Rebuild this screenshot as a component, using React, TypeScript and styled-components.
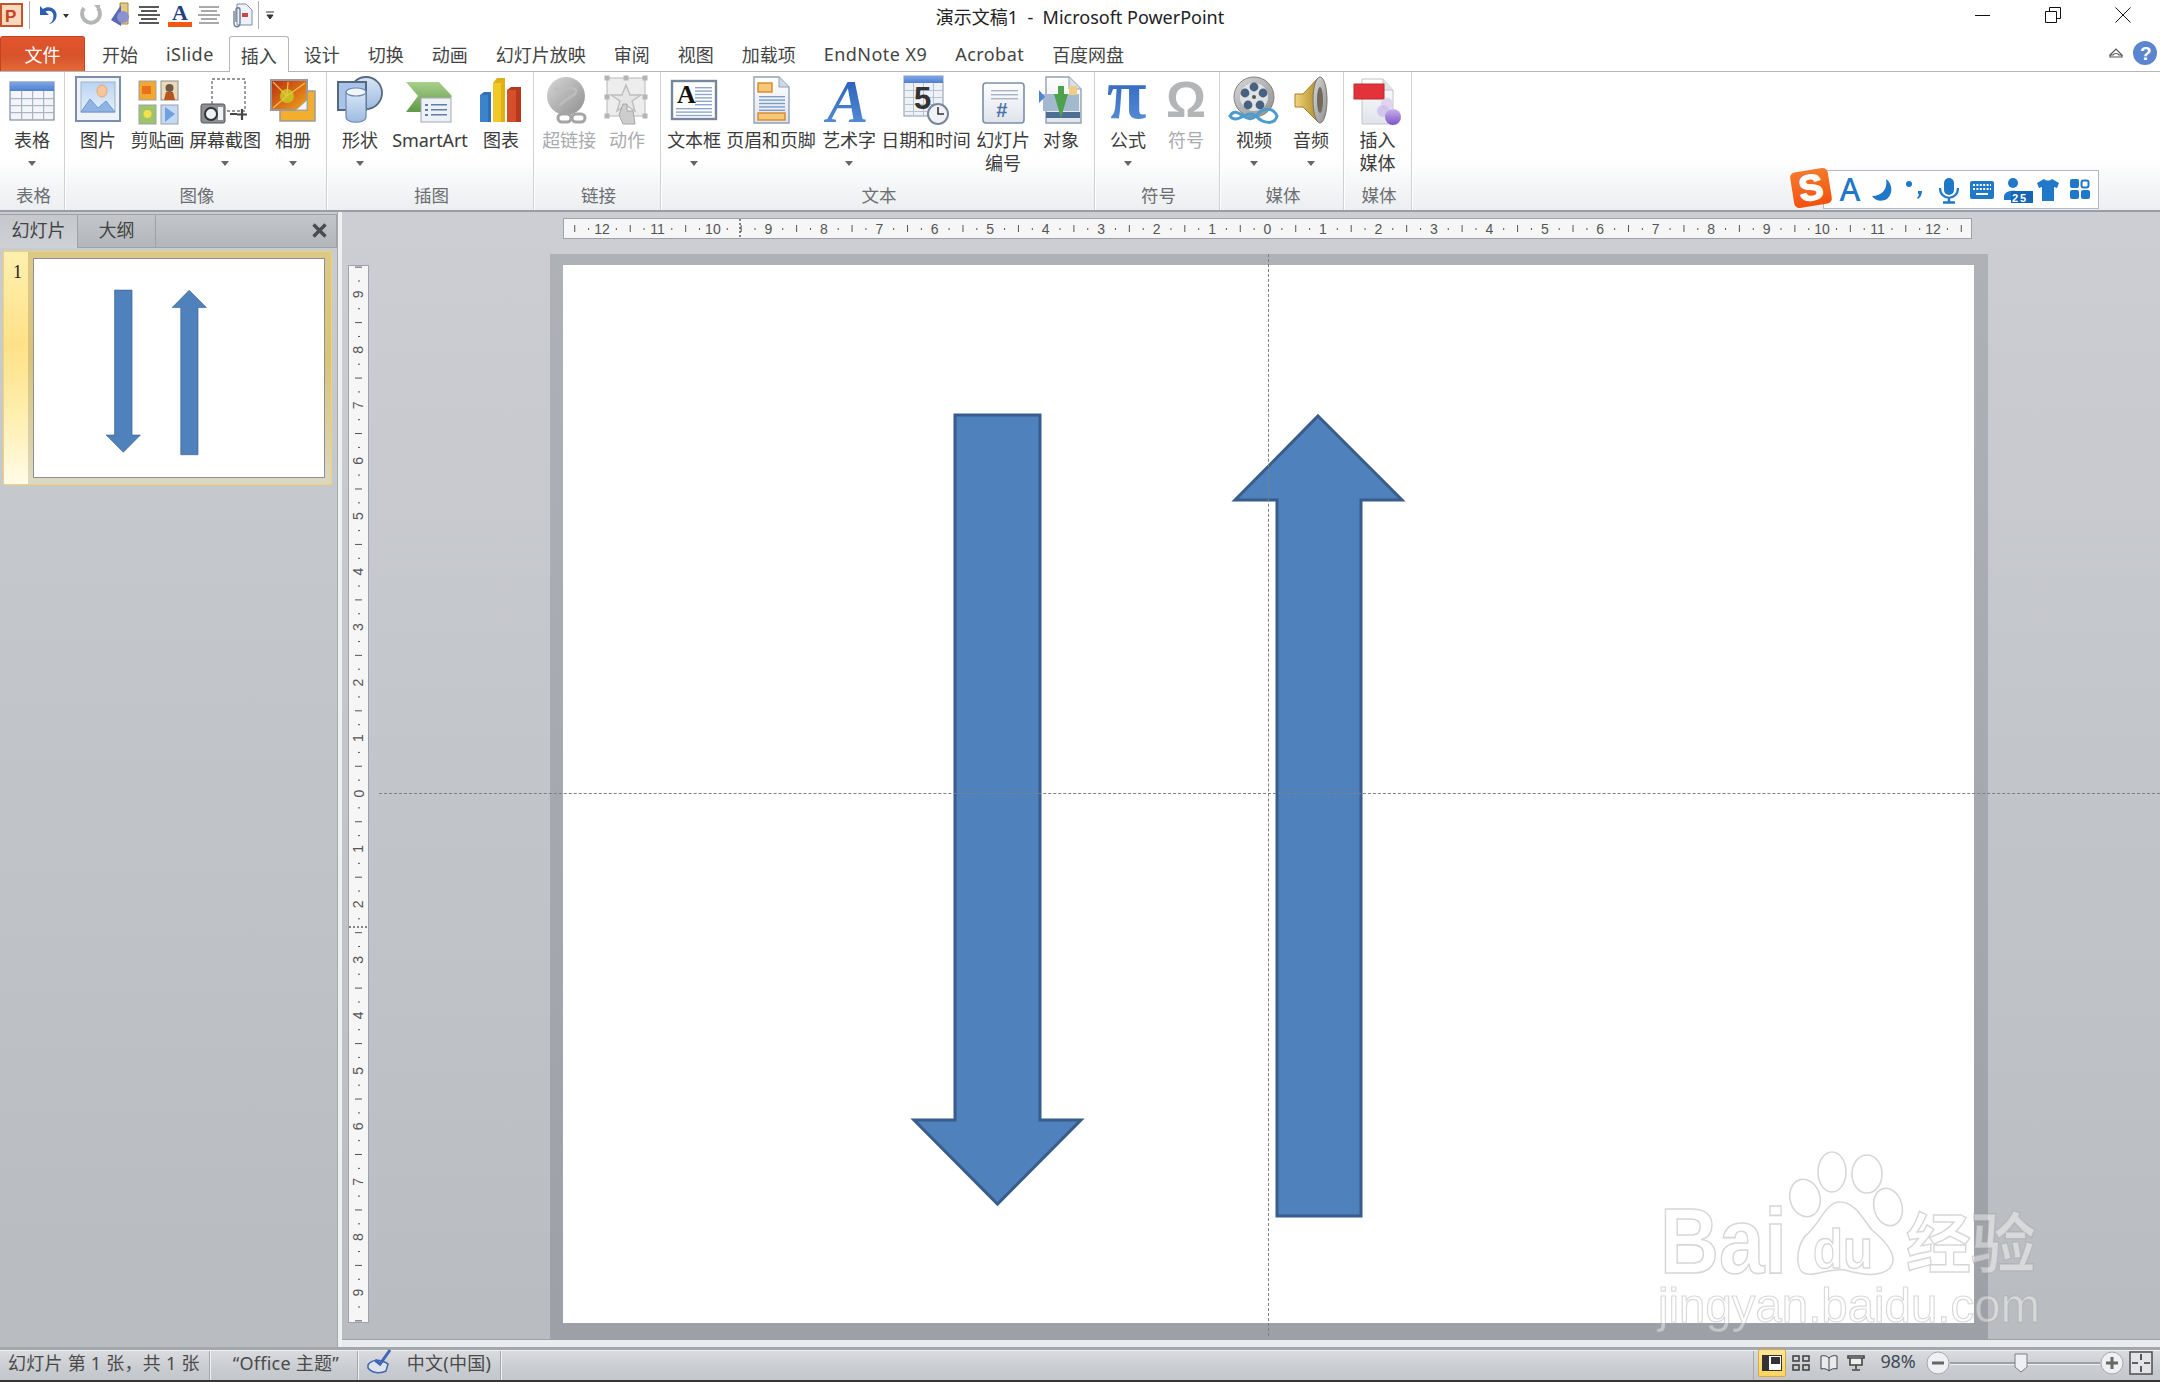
import React from "react";
import styled, { createGlobalStyle } from "styled-components";

const Global = createGlobalStyle`
  html, body { margin: 0; padding: 0; background: #fff; }
  body { font-family: "Noto Sans", "Noto Sans CJK SC", sans-serif; }
`;

const Root = styled.div`
  position: relative; width: 2160px; height: 1382px; overflow: hidden;
  display: flex; flex-direction: column; background: #c9ccd1;
`;
const Hidden = styled.svg`position: absolute; width: 0; height: 0;`;

/* ---------- title bar ---------- */
const TitleBar = styled.div`
  height: 36px; flex: none; background: #fff;
  display: grid; grid-template-columns: 1fr auto 1fr; align-items: center;
`;
const Qat = styled.div`display: flex; align-items: center; height: 36px;`;
const QatItem = styled.svg<{ $ml?: number }>`
  flex: none; margin-left: ${p => p.$ml ?? 0}px; display: block; margin-top: -6px; overflow: visible;
`;
const QatSep = styled.div<{ $ml: number }>`
  width: 1px; height: 28px; margin-top: -6px; background: #aeb1b5; margin-left: ${p => p.$ml}px; flex: none;
`;
const Title = styled.div`font-size: 18px; color: #222; margin-top: -4px; white-space: pre;`;
const WinControls = styled.div`display: flex; justify-content: flex-end; padding-right: 2px; margin-top: -6px;`;
const WinBtn = styled.div`width: 70px; height: 30px; display: flex; align-items: center; justify-content: center;`;

/* ---------- tabs ---------- */
const TabRow = styled.div`
  height: 36px; flex: none; position: relative; display: flex; align-items: stretch; background: #fff;
  border-bottom: 1px solid #b4b6ba; box-sizing: border-box;
`;
const FileTab = styled.div`
  width: 85px; margin-right: 3px; height: 35px; box-sizing: border-box; background: linear-gradient(#e2552e, #d8522a 55%, #e36a3a);
  border: 1px solid #c5431f; border-bottom: none; border-radius: 3px 3px 0 0; color: #fff; font-size: 18px;
  display: flex; align-items: center; justify-content: center;
`;
const Tab = styled.div<{ $active?: boolean; $latin?: boolean }>`
  padding: 0 ${p => (p.$active ? 11 : 14)}px; font-size: 18px; color: #444; display: flex; align-items: center; white-space: nowrap;
  margin: ${p => (p.$active ? "0 1px" : "0")};
  letter-spacing: ${p => (p.$latin ? "0.45px" : "0")};
  ${p => p.$active ? "height: 36px; box-sizing: border-box; background: #fff; border: 1px solid #b4b6ba; border-bottom: none; border-radius: 3px 3px 0 0; position: relative; z-index: 1;" : ""}
`;
const TabRight = styled.div`margin-left: auto; display: flex; align-items: center; gap: 10px; padding-right: 3px; margin-top: -2px;`;

/* ---------- ribbon ---------- */
const Ribbon = styled.div`
  height: 140px; flex: none; box-sizing: border-box; position: relative; display: flex;
  background: linear-gradient(#fff 0, #fff 62%, #eceef1 100%); border-bottom: 2px solid #9a9da3;
`;
const Group = styled.div<{ $w: number; $pad: number }>`
  width: ${p => p.$w}px; flex: none; box-sizing: border-box; display: flex; flex-direction: column;
  border-right: 1px solid #cfd1d5; box-shadow: 1px 0 0 #fff; padding-left: ${p => p.$pad}px;
`;
const GroupBtns = styled.div`flex: 1; display: flex; align-items: flex-start;`;
const GroupLabel = styled.div<{ $mlfix: number }>`
  height: 27px; line-height: 24px; padding-left: 3px; text-align: center; font-size: 17.5px; color: #6b6e72; margin-left: -${p => p.$mlfix}px;
`;
const BigBtn = styled.div<{ $w: number; $off?: boolean }>`
  width: ${p => p.$w}px; flex: none; display: flex; flex-direction: column; align-items: center; padding-top: 4px;
  color: ${p => (p.$off ? "#a9abae" : "#3c3c3c")};
`;
const BigIcon = styled.svg`display: block; width: 50px; height: 50px; flex: none; margin-bottom: 3px; overflow: visible;`;
const BigLabel = styled.div`
  font-size: 18px; line-height: 23px; text-align: center; white-space: nowrap; letter-spacing: -0.1px;
`;
const Caret = styled.div`
  width: 0; height: 0; border-left: 4px solid transparent; border-right: 4px solid transparent; border-top: 5px solid #666;
  margin-top: 9px;
`;

/* sogou */
const Sogou = styled.div`
  position: absolute; left: 1823px; top: 98px; width: 276px; height: 39px; box-sizing: border-box;
  background: #fff; border: 1px solid #b4b7c0; display: flex; align-items: center; z-index: 2;
`;
const SogouLogo = styled.div`
  position: absolute; left: -32px; top: -1px; width: 38px; height: 36px; background: linear-gradient(#f47a2c, #f4510f);
  border-radius: 5px; transform: rotate(-9deg); color: #fff; font: 700 36px/36px "Liberation Sans", sans-serif;
  text-align: center; -webkit-text-stroke: 1.5px #fff;
`;
const SogouItem = styled.svg<{ $left: number }>`
  position: absolute; left: ${p => p.$left}px; top: 6px; overflow: visible;
`;
const SogouLetter = styled.div`
  position: absolute; left: 13px; top: 0; width: 26px; text-align: center; font: 500 32px/35px "Noto Sans", sans-serif; color: #1f78c8;
`;

/* ---------- main ---------- */
const Main = styled.div`flex: none; height: 1135px; display: grid; grid-template-columns: 337px 5px 1fr;`;
const Panel = styled.div`display: flex; flex-direction: column; background: linear-gradient(#c9ccd1, #b8bbbf); border-right: 0;`;
const PanelTabs = styled.div`
  height: 34px; margin-top: 2px; flex: none; display: flex; box-sizing: border-box; border-top: 1px solid #9ea1a6; border-bottom: 1px solid #9ea1a6;
  border-right: 1px solid #9ea1a6;
  background: linear-gradient(#c2c5ca, #b2b5b9);
`;
const PanelTab = styled.div<{ $active?: boolean }>`
  width: 78px; box-sizing: border-box; text-align: center; line-height: 31px; font-size: 18px; color: #444;
  border-right: 1px solid #9ea1a6; ${p => p.$active ? "background: linear-gradient(#c4c7cc,#ced1d5); height: 33px;" : ""}
`;
const PanelClose = styled.svg`margin: 8px 9px 0 auto; display: block;`;
const ThumbRow = styled.div`
  margin: 3px 0 0 3px; width: 329px; height: 234px; box-sizing: border-box; display: flex; flex: none;
  border: 1px solid #f4d36a; border-radius: 2px;
`;
const ThumbStrip = styled.div`
  width: 24px; flex: none; background: linear-gradient(#fff0ae, #ffe188 40%, #ffeeae 70%, #fffbe6);
  font: 400 18px/1 "Liberation Serif", serif; color: #222; padding: 11px 0 0 9px; box-sizing: border-box;
`;
const ThumbBody = styled.div`
  flex: 1; padding: 6px 6px 6px 5px; background: linear-gradient(#dcc988, #d8c478 45%, #dcd8c2);
`;
const ThumbSlide = styled.div`
  width: 292px; height: 220px; box-sizing: border-box; background: #fff; border: 1px solid #8d8f92;
`;
const ThumbSvg = styled.svg`display: block; width: 100%; height: 100%;`;
const Splitter = styled.div`background: #eef0f2; border-left: 1px solid #a5a8ad;`;

const Editor = styled.div`display: flex; flex-direction: column; min-width: 0;`;
const EditorInner = styled.div`
  position: relative; height: 1128px; flex: none; display: grid;
  grid-template-columns: 36px 172px 1438px 1fr; grid-template-rows: 42px 1086px;
  background: linear-gradient(#ccced3, #b9bcc0); border-bottom: 1px solid #9ea1a6; box-sizing: border-box;
`;
const EditorFoot = styled.div`flex: 1; background: #e9ebee;`;
const HRulerWrap = styled.div`grid-column: 3; grid-row: 1; padding: 6px 0 0 13px;`;
const VRulerWrap = styled.div`grid-column: 1; grid-row: 1 / 3; padding: 53px 0 0 6px;`;
const RulerSvg = styled.svg`
  display: block; background: #f6f6f7; border: 1px solid #9fa2a8; box-sizing: content-box;
`;
const SlideFrame = styled.div`
  grid-column: 3; grid-row: 2; background: linear-gradient(#aeb1b6, #9da0a6); box-sizing: border-box;
  padding: 11px 14px 17px 13px;
`;
const SlideCanvas = styled.div`width: 1411px; height: 1058px; background: #fff;`;
const SlideSvg = styled.svg`display: block; width: 100%; height: 100%;`;
const GuideH = styled.div`
  position: absolute; left: 37px; right: 0; top: 581px; border-top: 1px dashed #7d8084;
`;
const GuideV = styled.div`
  position: absolute; left: 926px; top: 42px; bottom: 3px; border-left: 1px dashed #7d8084;
`;

/* ---------- status ---------- */
const Gap = styled.div`height: 3px; flex: none; background: #a4a8ae;`;
const Status = styled.div`
  height: 30px; flex: none; display: flex; align-items: center; background: linear-gradient(#d9dbdf, #c9ccd0 60%, #c3c6ca);
  color: #4a4a4a; font-size: 18px; box-sizing: border-box; border-top: 1px solid #eef0f2;
`;
const Bottom = styled.div`height: 2px; flex: none; background: #38342f;`;
const StatusCell = styled.div<{ $w: number }>`
  width: ${p => p.$w}px; flex: none; height: 100%; display: flex; align-items: center; box-sizing: border-box; padding: 0 0 8px 8px;
  border-right: 1px solid #a5a8ad; box-shadow: 1px 0 0 #eef0f2; white-space: pre; letter-spacing: 0.25px;
`;
const StatusRight = styled.div`margin-left: auto; width: 407px; height: 100%; display: flex; align-items: center; box-sizing: border-box; padding: 0 0 6px 4px; border-left: 1px solid #a5a8ad;`;
const ViewBtn = styled.div<{ $active?: boolean; $w: number }>`
  width: ${p => p.$w}px; height: 28px; flex: none; display: flex; align-items: center; justify-content: center; box-sizing: border-box; border-radius: 2px;
  ${p => p.$active ? "background: linear-gradient(#fde69a,#fbd45f); border: 1px solid #d5a93f;" : ""}
`;
const ZoomPct = styled.div`width: 56px; flex: none; text-align: center; font-size: 18px; color: #3f4a59; letter-spacing: -0.2px; margin-bottom: 3px;`;
const Slider = styled.div`position: relative; width: 150px; height: 2px; background: #9da0a6; box-shadow: 0 1px 0 #eef0f2; flex: none;`;
const Thumb = styled.svg`position: absolute; left: 64px; top: -9px;`;
const RoundIcon = styled.svg`flex: none; display: block;`;

/* ---------- watermark ---------- */
const Watermark = styled.svg`position: absolute; left: 1640px; top: 1140px; z-index: 5; pointer-events: none; filter: blur(0.5px);`;
const WmBig = styled.text`
  font: 700 92px "Liberation Sans", sans-serif; fill: rgba(255,255,255,.42); stroke: rgba(160,160,160,.42); stroke-width: 1.6px;
`;
const WmDu = styled.text`
  font: 700 56px "Liberation Sans", sans-serif; fill: rgba(255,255,255,.42); stroke: rgba(160,160,160,.42); stroke-width: 1.4px;
`;
const WmCn = styled.text`
  font: 700 65px "Noto Sans CJK SC", sans-serif; fill: rgba(255,255,255,.42); stroke: rgba(160,160,160,.42); stroke-width: 1.4px;
`;
const WmSmall = styled.text`
  font: 400 49px "Liberation Sans", sans-serif; fill: rgba(255,255,255,.42); stroke: rgba(160,160,160,.4); stroke-width: 1.2px;
`;
const RulerText = styled.text`font: 400 14px "Liberation Sans", sans-serif; fill: #555;`;
const IconGlyph = styled.text<{ $family?: string }>`font-family: ${p => p.$family ?? '"Liberation Serif", serif'};`;

/* ---------- icons ---------- */
const Defs = () => (
  <Hidden aria-hidden="true">
    <defs>
      <linearGradient id="hdr" x1="0" y1="0" x2="0" y2="1"><stop offset="0" stopColor="#7fa6e6" /><stop offset="1" stopColor="#4f7fcf" /></linearGradient>
      <linearGradient id="sky" x1="0" y1="0" x2="0" y2="1"><stop offset="0" stopColor="#b9d3f3" /><stop offset="1" stopColor="#e6f0fb" /></linearGradient>
      <linearGradient id="steel" x1="0" y1="0" x2="0" y2="1"><stop offset="0" stopColor="#d9e6f7" /><stop offset="1" stopColor="#9dbbe0" /></linearGradient>
      <linearGradient id="doc" x1="0" y1="0" x2="0" y2="1"><stop offset="0" stopColor="#fff" /><stop offset="1" stopColor="#dfe3ea" /></linearGradient>
      <linearGradient id="grn" x1="0" y1="0" x2="0" y2="1"><stop offset="0" stopColor="#a8cf8a" /><stop offset="1" stopColor="#5f9a45" /></linearGradient>
      <linearGradient id="pi" x1="0" y1="0" x2="0" y2="1"><stop offset="0" stopColor="#1f57b0" /><stop offset="1" stopColor="#5f94dc" /></linearGradient>
      <linearGradient id="gold" x1="0" y1="0" x2="1" y2="0"><stop offset="0" stopColor="#f1d57c" /><stop offset="1" stopColor="#b08a2a" /></linearGradient>
      <linearGradient id="gray" x1="0" y1="0" x2="1" y2="1"><stop offset="0" stopColor="#d8d8d8" /><stop offset="1" stopColor="#8f8f8f" /></linearGradient>
      <linearGradient id="purple" x1="0" y1="0" x2="0" y2="1"><stop offset="0" stopColor="#c6b2ea" /><stop offset="1" stopColor="#7d55c9" /></linearGradient>
      <linearGradient id="sun" x1="0" y1="0" x2="1" y2="1"><stop offset="0" stopColor="#b92b10" /><stop offset="1" stopColor="#f2a51c" /></linearGradient>
    </defs>
  </Hidden>
);

const Lines = ({ x, y, w, n, gap, c = "#8fa6c8" }: { x: number; y: number; w: number; n: number; gap: number; c?: string }) => (
  <>{Array.from({ length: n }, (_, i) => <rect key={i} x={x} y={y + i * gap} width={w} height={1.4} fill={c} />)}</>
);

const ITable = () => (
  <BigIcon viewBox="0 0 50 50">
    <rect x="3" y="6" width="44" height="38" fill="#f3f5f9" stroke="#68798f" />
    <rect x="3" y="6" width="44" height="9" fill="url(#hdr)" />
    {[14, 25, 36].map(x => <rect key={x} x={x} y="15" width="1.2" height="29" fill="#aab4c3" />)}
    {[22, 29, 36].map(y => <rect key={y} x="3" y={y} width="44" height="1.2" fill="#aab4c3" />)}
  </BigIcon>
);
const IPicture = () => (
  <BigIcon viewBox="0 0 50 50">
    <rect x="3" y="1" width="44" height="44" fill="#eef3fa" stroke="#7c8ea8" strokeWidth="2" />
    <rect x="8" y="6" width="34" height="30" fill="url(#sky)" stroke="#9fb2cc" />
    <ellipse cx="29" cy="15" rx="5" ry="6" fill="#f6c59d" stroke="#e9a36c" />
    <path d="M8 36 L17 23 L25 32 L33 25 L42 36 Z" fill="#8fb4e3" stroke="#6f95c9" />
  </BigIcon>
);
const IClip = () => (
  <BigIcon viewBox="0 0 50 50">
    <rect x="6" y="5" width="17" height="19" fill="#f2a72e" stroke="#9aa0a8" /><rect x="9" y="10" width="9" height="8" fill="#e9701f" />
    <rect x="28" y="5" width="17" height="19" fill="#ecd9b9" stroke="#8a8f96" /><circle cx="36.5" cy="12" r="4" fill="#6f5a4a" /><path d="M31 24 L33 16 L40 16 L42 24Z" fill="#b5551f" />
    <rect x="6" y="29" width="17" height="19" fill="#9ec46c" stroke="#9aa0a8" /><circle cx="14.5" cy="38" r="4" fill="#f3e04c" />
    <rect x="28" y="29" width="17" height="19" fill="#c4d9f2" stroke="#9aa0a8" /><path d="M32 31 L42 38 L32 46Z" fill="#6fa1de" />
  </BigIcon>
);
const IShot = () => (
  <BigIcon viewBox="0 0 50 50">
    <rect x="12" y="3" width="33" height="32" fill="none" stroke="#777" strokeDasharray="3 2" strokeWidth="1.4" />
    <rect x="1" y="28" width="24" height="19" rx="2" fill="#8c8f93" stroke="#555" />
    <circle cx="11" cy="38" r="6" fill="#eef2f6" stroke="#333" strokeWidth="2" /><rect x="18" y="31" width="5" height="13" fill="#eef2f6" />
    <path d="M30 38 H37 M42 33 V44 M37 38.5 H47" stroke="#444" strokeWidth="2.2" />
  </BigIcon>
);
const IAlbum = () => (
  <BigIcon viewBox="0 0 50 50">
    <rect x="12" y="15" width="35" height="30" fill="#f2ae2c" stroke="#9a9a9a" strokeWidth="1.5" />
    <rect x="3" y="4" width="36" height="30" fill="url(#sun)" stroke="#9a9a9a" strokeWidth="2" />
    <circle cx="19" cy="20" r="7" fill="#c4bf1f" />
    <path d="M19 20 L5 6 M19 20 L37 7 M19 20 L5 32 M19 20 L20 6" stroke="#f2c14a" strokeWidth="1.2" />
    <path d="M28 34 L39 24 L39 34Z" fill="#f5f5f5" stroke="#aaa" />
  </BigIcon>
);
const IShapes = () => (
  <BigIcon viewBox="0 0 50 50">
    <circle cx="31" cy="17" r="16" fill="url(#steel)" stroke="#56687f" strokeWidth="1.8" />
    <rect x="3" y="6" width="28" height="28" fill="#a9c4e8" stroke="#56687f" strokeWidth="2" />
    <path d="M11 16 V41 C11 48 31 48 31 41 V16Z" fill="url(#steel)" stroke="#6d88ad" strokeWidth="1.2" />
    <ellipse cx="21" cy="16" rx="10" ry="4" fill="#f2f6fc" stroke="#6d88ad" strokeWidth="1.2" />
  </BigIcon>
);
const ISmart = () => (
  <BigIcon viewBox="0 0 50 50">
    <path d="M1 6 H34 L47 20 L34 36 H1 L13 20Z" fill="url(#grn)" />
    <rect x="16" y="22" width="30" height="24" fill="#eef1f5" stroke="#a0a8b3" />
    <rect x="20" y="28" width="3" height="2" fill="#5e7fa6" /><rect x="26" y="28" width="16" height="1.5" fill="#5e7fa6" />
    <rect x="20" y="33" width="3" height="2" fill="#5e7fa6" /><rect x="26" y="33" width="16" height="1.5" fill="#5e7fa6" />
    <rect x="20" y="38" width="3" height="2" fill="#5e7fa6" /><rect x="26" y="38" width="16" height="1.5" fill="#5e7fa6" />
  </BigIcon>
);
const IChart = () => (
  <BigIcon viewBox="0 0 50 50">
    <path d="M4 19 L8 16 H15 V46 H4Z" fill="#2f6fb6" /><rect x="4" y="19" width="8" height="27" fill="#3c83cc" />
    <path d="M17 7 L21 2 H29 V46 H17Z" fill="#e0b017" /><rect x="17" y="7" width="8" height="39" fill="#f0c926" />
    <path d="M31 14 L35 11 H45 V46 H31Z" fill="#b8381c" /><rect x="31" y="14" width="9" height="32" fill="#d5502a" />
  </BigIcon>
);
const ILink = () => (
  <BigIcon viewBox="0 0 50 50">
    <ellipse cx="22" cy="20" rx="19" ry="19" fill="url(#gray)" />
    <path d="M10 12 C18 16 28 8 32 14 C34 20 20 22 16 30" fill="none" stroke="#bdbdbd" strokeWidth="2.5" />
    <rect x="14" y="38" width="13" height="8" rx="4" fill="none" stroke="#a5a5a5" strokeWidth="3" />
    <rect x="28" y="38" width="13" height="8" rx="4" fill="none" stroke="#a5a5a5" strokeWidth="3" />
  </BigIcon>
);
const IAction = () => (
  <BigIcon viewBox="0 0 50 50">
    <rect x="5" y="2" width="38" height="38" fill="#ededed" stroke="#b8b8b8" />
    {[[5, 2], [24, 2], [43, 2], [5, 21], [43, 21], [5, 40], [43, 40]].map(([x, y]) => <rect key={`${x}-${y}`} x={x - 2.5} y={y - 2.5} width="5" height="5" fill="#b5b5b5" />)}
    <path d="M24 9 L28 19 L39 19 L30 25 L33 35 L24 29 L15 35 L18 25 L9 19 L20 19Z" fill="#e5e5e5" stroke="#bdbdbd" strokeWidth="1.4" />
    <path d="M21 28 H25 V35 H31 L33 48 H21 L17 39Z" fill="#cdcdcd" stroke="#a6a6a6" />
  </BigIcon>
);
const ITextbox = () => (
  <BigIcon viewBox="0 0 50 50">
    <rect x="3" y="5" width="44" height="38" fill="#fff" stroke="#77869b" strokeWidth="2.4" />
    <IconGlyph x="8" y="27" fontSize="26" fontWeight="700" fill="#111">A</IconGlyph>
    <Lines x={26} y={11} w={17} n={6} gap={3.4} />
    <Lines x={7} y={32} w={36} n={3} gap={3.4} />
  </BigIcon>
);
const IHeader = () => (
  <BigIcon viewBox="0 0 50 50">
    <path d="M8 1 H33 L43 11 V47 H8Z" fill="url(#doc)" stroke="#93a1b3" strokeWidth="1.4" />
    <path d="M33 1 V11 H43" fill="#cfd9e6" stroke="#93a1b3" />
    <rect x="12" y="7" width="14" height="9" fill="#f6c67b" stroke="#d38a28" strokeWidth="1.4" />
    <Lines x={13} y={20} w={26} n={5} gap={3.4} c="#7a9ccb" />
    <rect x="12" y="37" width="27" height="7" fill="#f6c67b" stroke="#d38a28" strokeWidth="1.4" />
  </BigIcon>
);
const IWordArt = () => (
  <BigIcon viewBox="0 0 50 50">
    <IconGlyph x="3" y="46" fontSize="62" fontStyle="italic" fontWeight="700" fill="url(#pi)">A</IconGlyph>
  </BigIcon>
);
const IDate = () => (
  <BigIcon viewBox="0 0 50 50">
    <rect x="3" y="0" width="39" height="40" fill="#eef1f6" stroke="#8b99ad" />
    <rect x="3" y="0" width="39" height="7" fill="url(#hdr)" />
    {[12, 22, 32].map(x => <rect key={x} x={x} y="7" width="1" height="33" fill="#b9c2cf" />)}
    {[14, 21, 28, 35].map(y => <rect key={y} x="3" y={y} width="39" height="1" fill="#b9c2cf" />)}
    <IconGlyph x="13" y="33" fontSize="31" fontWeight="700" fill="#333" $family='"Liberation Sans", sans-serif'>5</IconGlyph>
    <circle cx="37" cy="38" r="10" fill="#f0f2f5" stroke="#7b8796" strokeWidth="2" />
    <path d="M37 31 V38 H43" fill="none" stroke="#333" strokeWidth="1.6" />
  </BigIcon>
);
const INumber = () => (
  <BigIcon viewBox="0 0 50 50">
    <rect x="5" y="7" width="41" height="40" rx="3" fill="url(#doc)" stroke="#7c8ea8" strokeWidth="1.6" />
    <Lines x={13} y={14} w={27} n={3} gap={4} c="#a9b4c4" />
    <IconGlyph x="18" y="41" fontSize="20" fontWeight="700" fontStyle="italic" fill="#4d74a8" $family='"Liberation Sans", sans-serif'>#</IconGlyph>
  </BigIcon>
);
const IObject = () => (
  <BigIcon viewBox="0 0 50 50">
    <path d="M10 1 H33 L45 13 V47 H10Z" fill="url(#doc)" stroke="#93a1b3" strokeWidth="1.4" />
    <path d="M33 1 V13 H45" fill="#d5deea" stroke="#93a1b3" />
    <rect x="7" y="18" width="36" height="17" fill="#a3b9d0" />
    <rect x="10" y="36" width="34" height="6" fill="#4e6f94" />
    <path d="M22 10 h6 v8 h4 l-7 24 l-7 -24 h4z" fill="#4ea24e" />
    <rect x="33" y="10" width="8" height="9" fill="#edcf83" />
    <path d="M3 14 L9 21 L3 27Z" fill="#4f84cf" />
  </BigIcon>
);
const IPi = () => (
  <BigIcon viewBox="0 0 50 50">
    <IconGlyph x="4" y="42" fontSize="72" fontWeight="700" fill="url(#pi)">π</IconGlyph>
  </BigIcon>
);
const IOmega = () => (
  <BigIcon viewBox="0 0 50 50">
    <IconGlyph x="5" y="41" fontSize="50" fontWeight="700" fill="#b3b5b7" $family='"Liberation Sans", sans-serif'>Ω</IconGlyph>
  </BigIcon>
);
const IVideo = () => (
  <BigIcon viewBox="0 0 50 50">
    <circle cx="25" cy="21" r="20" fill="url(#gray)" stroke="#7d8186" />
    <circle cx="25" cy="21" r="14" fill="#dfe3e6" />
    {[[25, 11], [34, 17], [31, 29], [19, 29], [16, 17]].map(([x, y]) => <circle key={`${x}-${y}`} cx={x} cy={y} r="4.4" fill="#47617e" />)}
    <circle cx="25" cy="21" r="2" fill="#555" />
    <path d="M1 40 C8 28 18 50 27 40 C34 31 44 31 48 40 C46 49 34 48 27 40 C18 32 8 50 1 40Z" fill="none" stroke="#4d9ccb" strokeWidth="3" />
  </BigIcon>
);
const IAudio = () => (
  <BigIcon viewBox="0 0 50 50">
    <path d="M9 18 H17 L32 2 V46 L17 31 H9Z" fill="url(#gold)" stroke="#a3812c" />
    <ellipse cx="34" cy="24" rx="7" ry="23" fill="url(#gray)" stroke="#77746a" />
    <ellipse cx="34" cy="24" rx="3" ry="13" fill="#6f6a5d" />
  </BigIcon>
);
const IMedia = () => (
  <BigIcon viewBox="0 0 50 50">
    <path d="M9 3 H30 L40 14 V48 H9Z" fill="url(#doc)" stroke="#c2c4c8" />
    <path d="M30 3 V14 H40" fill="#e3e4e8" stroke="#c2c4c8" />
    <rect x="1" y="8" width="30" height="15" fill="#e3323a" stroke="#b92b31" />
    <circle cx="34" cy="28" r="6" fill="#d9cdee" opacity=".8" />
    <circle cx="30" cy="35" r="6" fill="#cdbdea" opacity=".8" />
    <circle cx="40" cy="41" r="8" fill="url(#purple)" />
  </BigIcon>
);

type Btn = { w: number; icon: React.ReactNode; label: string[]; caret?: boolean; off?: boolean };
type Grp = { w: number; pad: number; name: string; btns: Btn[] };
const groups: Grp[] = [
  { w: 65, pad: 0, name: "表格", btns: [{ w: 64, icon: <ITable />, label: ["表格"], caret: true }] },
  { w: 262, pad: 2, name: "图像", btns: [
    { w: 62, icon: <IPicture />, label: ["图片"] },
    { w: 57, icon: <IClip />, label: ["剪贴画"] },
    { w: 78, icon: <IShot />, label: ["屏幕截图"], caret: true },
    { w: 58, icon: <IAlbum />, label: ["相册"], caret: true },
  ] },
  { w: 207, pad: 4, name: "插图", btns: [
    { w: 58, icon: <IShapes />, label: ["形状"], caret: true },
    { w: 82, icon: <ISmart />, label: ["SmartArt"] },
    { w: 60, icon: <IChart />, label: ["图表"] },
  ] },
  { w: 127, pad: 2, name: "链接", btns: [
    { w: 66, icon: <ILink />, label: ["超链接"], off: true },
    { w: 50, icon: <IAction />, label: ["动作"], off: true },
  ] },
  { w: 434, pad: 1, name: "文本", btns: [
    { w: 64, icon: <ITextbox />, label: ["文本框"], caret: true },
    { w: 90, icon: <IHeader />, label: ["页眉和页脚"] },
    { w: 66, icon: <IWordArt />, label: ["艺术字"], caret: true },
    { w: 88, icon: <IDate />, label: ["日期和时间"] },
    { w: 66, icon: <INumber />, label: ["幻灯片", "编号"] },
    { w: 50, icon: <IObject />, label: ["对象"] },
  ] },
  { w: 125, pad: 3, name: "符号", btns: [
    { w: 60, icon: <IPi />, label: ["公式"], caret: true },
    { w: 56, icon: <IOmega />, label: ["符号"], off: true },
  ] },
  { w: 124, pad: 4, name: "媒体", btns: [
    { w: 60, icon: <IVideo />, label: ["视频"], caret: true },
    { w: 54, icon: <IAudio />, label: ["音频"], caret: true },
  ] },
  { w: 68, pad: 0, name: "媒体", btns: [{ w: 67, icon: <IMedia />, label: ["插入", "媒体"] }] },
];

const tabs = ["开始", "iSlide", "插入", "设计", "切换", "动画", "幻灯片放映", "审阅", "视图", "加载项", "EndNote X9", "Acrobat", "百度网盘"];

const Arrows = () => (
  <g fill="#4f81bd" stroke="#385d8a" strokeWidth="3" strokeLinejoin="miter">
    <path d="M392 150 H477 V855 H518 L434.5 939 L351 855 H392Z" />
    <path d="M755 151 L839 235 H798 V951 H714 V235 H672Z" />
  </g>
);

const HRuler = () => {
  const origin = 703.5, step = 55.46;
  const marks: React.ReactNode[] = [];
  for (let i = -50; i <= 50; i++) {
    const v = i / 4, x = origin + v * step;
    if (i % 4 === 0) marks.push(<RulerText key={i} x={x} y="15" textAnchor="middle">{Math.abs(v)}</RulerText>);
    else if (i % 2 === 0) marks.push(<rect key={i} x={x} y="6" width="1" height="7" fill="#555" />);
    else marks.push(<rect key={i} x={x} y="9" width="1" height="2" fill="#555" />);
  }
  return (
    <RulerSvg width="1407" height="19" viewBox="0 0 1407 19">
      {marks}
      <path d="M176 0 V19" stroke="#111" strokeDasharray="2 2" />
    </RulerSvg>
  );
};
const VRuler = () => {
  const origin = 527.5, step = 55.46;
  const marks: React.ReactNode[] = [];
  for (let i = -38; i <= 38; i++) {
    const v = i / 4, y = origin + v * step;
    if (i % 4 === 0) marks.push(<RulerText key={i} x="9.5" y={y} textAnchor="middle" dominantBaseline="central" transform={`rotate(-90 9.5 ${y})`}>{Math.abs(v)}</RulerText>);
    else if (i % 2 === 0) marks.push(<rect key={i} x="6" y={y} width="7" height="1" fill="#555" />);
    else marks.push(<rect key={i} x="9" y={y} width="2" height="1" fill="#555" />);
  }
  return (
    <RulerSvg width="19" height="1056" viewBox="0 0 19 1056">
      {marks}
      <path d="M0 661 H19" stroke="#111" strokeDasharray="2 2" />
    </RulerSvg>
  );
};

export default function App() {
  return (
    <Root>
      <Global />
      <Defs />
      <TitleBar>
        <Qat>
          <QatItem width="24" height="26" viewBox="0 0 24 26" $ml={0}>
            <rect x="1" y="2" width="21" height="22" fill="#f7d9c0" stroke="#c9512a" strokeWidth="2" />
            <IconGlyph x="5" y="20" fontSize="17" fontWeight="700" fill="#c9431c" $family='"Liberation Sans", sans-serif'>P</IconGlyph>
          </QatItem>
          <QatSep $ml={5} />
          <QatItem width="24" height="24" viewBox="0 0 24 24" $ml={5}>
            <path d="M5 3 V12 H14 L10.5 8.5 C15 6 20 9 18 16 C17.5 18 16 20 14 21 C20 20 23 14 21 9 C19 4 12 3 8 6Z" fill="#2e5fb5" />
          </QatItem>
          <QatItem width="10" height="24" viewBox="0 0 10 24" $ml={2}><path d="M2 11 H8 L5 15Z" fill="#333" /></QatItem>
          <QatItem width="24" height="24" viewBox="0 0 24 24" $ml={8}>
            <path d="M5 5 A9 9 0 1 0 19 5" fill="none" stroke="#b3b5b7" strokeWidth="4" /><path d="M15 2 H21 V9Z" fill="#b3b5b7" />
          </QatItem>
          <QatItem width="24" height="26" viewBox="0 0 24 26" $ml={5}>
            <path d="M12 1 H20 V22 H12Z" fill="#e7c97e" stroke="#a58b4a" /><path d="M3 18 L13 3 V24Z" fill="#5a68b8" /><circle cx="15" cy="15" r="6" fill="#8a93cf" />
          </QatItem>
          <QatItem width="24" height="24" viewBox="0 0 24 24" $ml={5}>
            <path d="M2 4 H22 M4 8 H20 M1 12 H23 M4 16 H20 M2 20 H22" stroke="#222" strokeWidth="1.5" />
          </QatItem>
          <QatItem width="24" height="26" viewBox="0 0 24 26" $ml={7}>
            <IconGlyph x="4" y="18" fontSize="22" fontWeight="700" fill="#22407f">A</IconGlyph>
            <rect x="0" y="20" width="24" height="5" fill="#f25a12" />
          </QatItem>
          <QatItem width="24" height="24" viewBox="0 0 24 24" $ml={5}>
            <path d="M2 4 H22 M4 8 H20 M1 12 H23 M4 16 H20 M2 20 H22" stroke="#8d8d8d" strokeWidth="1.3" />
          </QatItem>
          <QatItem width="24" height="28" viewBox="0 0 24 28" $ml={8}>
            <path d="M8 3 H17 L23 9 V24 H8Z" fill="#eef2f8" stroke="#7d8ca3" /><rect x="13" y="12" width="6" height="4" fill="#cc4444" />
            <path d="M5 10 V22 C5 27 11 27 11 22 V9 C11 6 7 6 7 9 V21" fill="none" stroke="#6e7f96" strokeWidth="1.4" />
          </QatItem>
          <QatSep $ml={5} />
          <QatItem width="10" height="24" viewBox="0 0 10 24" $ml={6}><path d="M1 9 H9 M2 12 H8 L5 16Z" fill="#333" stroke="#333" strokeWidth="1" /></QatItem>
        </Qat>
        <Title>演示文稿1  -  Microsoft PowerPoint</Title>
        <WinControls>
          <WinBtn><svg width="16" height="16" viewBox="0 0 16 16"><path d="M0 8.5 H15" stroke="#111" /></svg></WinBtn>
          <WinBtn><svg width="16" height="16" viewBox="0 0 16 16"><path d="M.5 4.5 H11.5 V15.5 H.5Z M4.5 4.5 V.5 H15.5 V11.5 H11.5" fill="none" stroke="#111" /></svg></WinBtn>
          <WinBtn><svg width="16" height="16" viewBox="0 0 16 16"><path d="M.5 .5 L15.5 15.5 M15.5 .5 L.5 15.5" stroke="#111" /></svg></WinBtn>
        </WinControls>
      </TitleBar>

      <TabRow>
        <FileTab>文件</FileTab>
        {tabs.map(t => <Tab key={t} $active={t === "插入"} $latin={/^[A-Za-z]/.test(t)}>{t}</Tab>)}
        <TabRight>
          <svg width="14" height="12" viewBox="0 0 14 12"><path d="M1 8 L7 2 L13 8 L10 8 C9 6 5 6 4 8Z M1 8 V10 H13 V8" fill="none" stroke="#555" strokeWidth="1.2" /></svg>
          <svg width="24" height="24" viewBox="0 0 24 24">
            <circle cx="12" cy="12" r="12" fill="#5b86cf" />
            <IconGlyph x="7" y="19" fontSize="19" fontWeight="700" fill="#fff" $family='"Liberation Sans", sans-serif'>?</IconGlyph>
          </svg>
        </TabRight>
      </TabRow>

      <Ribbon>
        {groups.map((g, gi) => (
          <Group key={gi} $w={g.w} $pad={g.pad}>
            <GroupBtns>
              {g.btns.map(b => (
                <BigBtn key={b.label.join("")} $w={b.w} $off={b.off}>
                  {b.icon}
                  {b.label.map(l => <BigLabel key={l}>{l}</BigLabel>)}
                  {b.caret && <Caret />}
                </BigBtn>
              ))}
            </GroupBtns>
            <GroupLabel $mlfix={g.pad}>{g.name}</GroupLabel>
          </Group>
        ))}
        <Sogou>
          <SogouLogo>S</SogouLogo>
          <SogouLetter>A</SogouLetter>
          <SogouItem $left={46} width="24" height="26" viewBox="0 0 24 26"><path d="M16 2 C18 12 12 19 2 19 C5 24 12 25 17 22 C23 17 23 7 16 2Z" fill="#1f78c8" /></SogouItem>
          <SogouItem $left={80} width="24" height="26" viewBox="0 0 24 26"><circle cx="5" cy="7" r="3" fill="#1f78c8" /><path d="M14 14 h4 q0 5 -4 8 l-1 -1 q2 -2 2 -4 h-1z" fill="#1f78c8" /></SogouItem>
          <SogouItem $left={113} width="24" height="28" viewBox="0 0 24 28"><rect x="7" y="1" width="10" height="17" rx="5" fill="#1f78c8" /><path d="M3 11 C3 24 21 24 21 11" fill="none" stroke="#1f78c8" strokeWidth="2.2" /><path d="M12 21 V25 M6 25.5 H18" stroke="#1f78c8" strokeWidth="2.4" /></SogouItem>
          <SogouItem $left={145} width="26" height="26" viewBox="0 0 26 26"><rect x="1" y="4" width="24" height="18" rx="2" fill="#1f78c8" /><path d="M4 8 H22 M4 12 H22" stroke="#fff" strokeWidth="2" strokeDasharray="2 1.4" /><path d="M7 17 H19" stroke="#fff" strokeWidth="2" /></SogouItem>
          <SogouItem $left={179} width="30" height="28" viewBox="0 0 30 28"><circle cx="10" cy="6" r="5" fill="#1f78c8" /><path d="M1 19 C2 12 18 12 19 19 V23 H1Z" fill="#1f78c8" /><rect x="8" y="14" width="22" height="12" fill="#1766b4" /><IconGlyph x="9" y="24.5" fontSize="11" fontWeight="700" fill="#fff" letterSpacing="2" $family='"Liberation Sans", sans-serif'>25</IconGlyph></SogouItem>
          <SogouItem $left={212} width="24" height="26" viewBox="0 0 24 26"><path d="M8 2 C10 4 14 4 16 2 L23 6 L21 11 L18 10 V24 H6 V10 L3 11 L1 6Z" fill="#1f78c8" /></SogouItem>
          <SogouItem $left={245} width="22" height="24" viewBox="0 0 22 24"><rect x="1" y="2" width="9" height="9" rx="2" fill="#1f78c8" /><rect x="12.5" y="3.5" width="7" height="7" rx="2" fill="#fff" stroke="#1f78c8" strokeWidth="2" /><rect x="1" y="13" width="9" height="9" rx="2" fill="#1f78c8" /><rect x="12" y="13" width="9" height="9" rx="2" fill="#1f78c8" /></SogouItem>
        </Sogou>
      </Ribbon>

      <Main>
        <Panel>
          <PanelTabs>
            <PanelTab $active>幻灯片</PanelTab>
            <PanelTab>大纲</PanelTab>
            <PanelClose width="15" height="15" viewBox="0 0 15 15"><path d="M1.5 1.5 L13.5 13.5 M13.5 1.5 L1.5 13.5" stroke="#4a4c50" strokeWidth="3.4" /></PanelClose>
          </PanelTabs>
          <ThumbRow>
            <ThumbStrip>1</ThumbStrip>
            <ThumbBody>
              <ThumbSlide>
                <ThumbSvg viewBox="0 0 1411 1058"><Arrows /></ThumbSvg>
              </ThumbSlide>
            </ThumbBody>
          </ThumbRow>
        </Panel>
        <Splitter />
        <Editor>
          <EditorInner>
            <HRulerWrap><HRuler /></HRulerWrap>
            <VRulerWrap><VRuler /></VRulerWrap>
            <SlideFrame>
              <SlideCanvas>
                <SlideSvg viewBox="0 0 1411 1058"><Arrows /></SlideSvg>
              </SlideCanvas>
            </SlideFrame>
            <GuideH />
            <GuideV />
          </EditorInner>
          <EditorFoot />
        </Editor>
      </Main>
      <Gap />
      <Status>
        <StatusCell $w={210}>幻灯片 第 1 张，共 1 张</StatusCell>
        <StatusCell $w={148}>   “Office 主题”</StatusCell>
        <StatusCell $w={143}>
          <svg width="26" height="26" viewBox="0 0 26 26"><path d="M2 16 C6 10 14 10 22 15 L20 22 C14 25 6 24 2 19Z" fill="#dfe4ec" stroke="#3f67b5" strokeWidth="1.5" /><path d="M9 11 L14 15 L24 1" fill="none" stroke="#3f67b5" strokeWidth="3" /></svg>
          <span>{"   "}中文(中国)</span>
        </StatusCell>
        <StatusRight>
          <ViewBtn $active $w={28}>
            <svg width="20" height="16" viewBox="0 0 20 16"><rect x=".5" y=".5" width="19" height="15" fill="#fff" stroke="#333" /><rect x="0" y="0" width="7" height="16" fill="#333" /><rect x="9" y="2" width="9" height="7" fill="#333" /></svg>
          </ViewBtn>
          <ViewBtn $w={29}>
            <svg width="18" height="16" viewBox="0 0 18 16"><g fill="none" stroke="#444" strokeWidth="1.6"><rect x="1" y="1" width="6" height="5" /><rect x="11" y="1" width="6" height="5" /><rect x="1" y="10" width="6" height="5" /><rect x="11" y="10" width="6" height="5" /></g></svg>
          </ViewBtn>
          <ViewBtn $w={27}>
            <svg width="18" height="18" viewBox="0 0 18 18"><path d="M1 2 C4 1 7 2 9 4 C11 2 14 1 17 2 V15 C14 14 11 15 9 17 C7 15 4 14 1 15Z M9 4 V17" fill="#e8eaed" stroke="#444" /></svg>
          </ViewBtn>
          <ViewBtn $w={28}>
            <svg width="18" height="18" viewBox="0 0 18 18"><path d="M1 2 H17 V4 H1Z M3 4 H15 V11 H3Z M9 11 V15 M5 16 H13" fill="#eee" stroke="#444" strokeWidth="1.6" /></svg>
          </ViewBtn>
          <ZoomPct>98%</ZoomPct>
          <RoundIcon width="24" height="24" viewBox="0 0 24 24"><circle cx="12" cy="12" r="11" fill="#eef0f3" stroke="#a5a8ad" /><rect x="6" y="10.5" width="12" height="3" fill="#666" /></RoundIcon>
          <Slider>
            <Thumb width="14" height="20" viewBox="0 0 14 20"><path d="M1 1 H13 V14 L7 19 L1 14Z" fill="#eef0f3" stroke="#7d8188" /></Thumb>
          </Slider>
          <RoundIcon width="24" height="24" viewBox="0 0 24 24"><circle cx="12" cy="12" r="11" fill="#eef0f3" stroke="#a5a8ad" /><path d="M6 10.5 H10.5 V6 H13.5 V10.5 H18 V13.5 H13.5 V18 H10.5 V13.5 H6Z" fill="#666" /></RoundIcon>
          <ViewBtn $w={33}>
            <svg width="24" height="24" viewBox="0 0 24 24"><rect x="1" y="1" width="22" height="22" fill="#e2e4e7" stroke="#555" strokeWidth="1.6" /><path d="M12 3 V9 M12 15 V21 M3 12 H9 M15 12 H21" stroke="#333" strokeWidth="1.6" /></svg>
          </ViewBtn>
        </StatusRight>
      </Status>
      <Bottom />

      <Watermark width="420" height="200" viewBox="0 0 420 200">
        <WmBig x="20" y="133" textLength="127" lengthAdjust="spacingAndGlyphs">Bai</WmBig>
        <g fill="rgba(255,255,255,.42)" stroke="rgba(160,160,160,.42)" strokeWidth="1.6">
          <ellipse cx="165" cy="58" rx="15" ry="19" transform="rotate(-15 165 58)" />
          <ellipse cx="192" cy="32" rx="14" ry="20" />
          <ellipse cx="227" cy="34" rx="15" ry="19" />
          <ellipse cx="248" cy="67" rx="14" ry="19" transform="rotate(-15 248 67)" />
          <path d="M200 62 C215 62 222 78 232 90 C250 105 258 118 250 128 C240 138 222 135 205 130 C190 128 175 136 168 134 C155 134 155 110 165 96 C180 85 185 62 200 62Z" />
        </g>
        <WmDu x="173" y="128" textLength="60" lengthAdjust="spacingAndGlyphs">du</WmDu>
        <WmCn x="266" y="127">经验</WmCn>
        <WmSmall x="18" y="182" textLength="382" lengthAdjust="spacingAndGlyphs">jingyan.baidu.com</WmSmall>
      </Watermark>
    </Root>
  );
}
